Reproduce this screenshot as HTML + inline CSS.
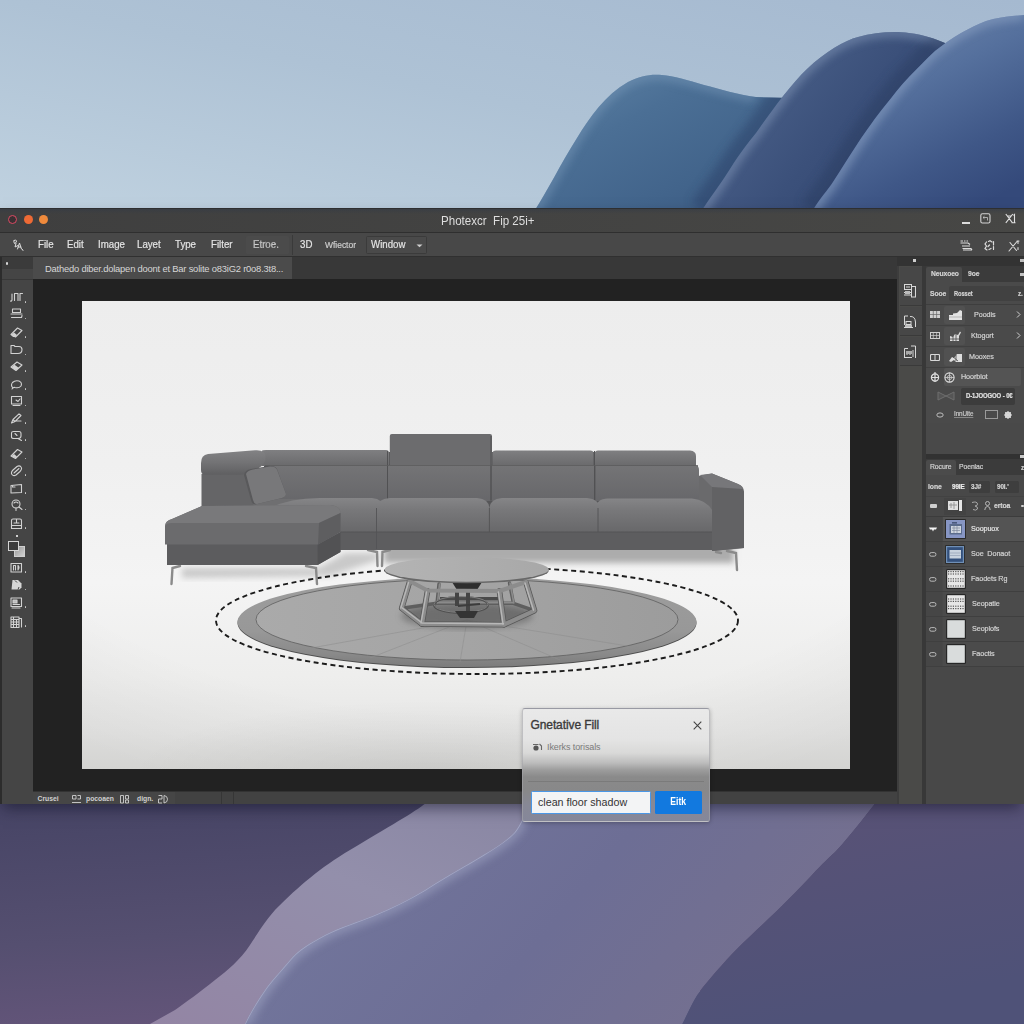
<!DOCTYPE html>
<html><head><meta charset="utf-8">
<style>
*{box-sizing:border-box;margin:0;padding:0}
html,body{width:1024px;height:1024px;overflow:hidden;background:#aec2d5;font-family:"Liberation Sans",sans-serif;}
.abs{position:absolute}
#wall{position:absolute;left:0;top:0;width:1024px;height:1024px}
#win{position:absolute;left:0;top:208px;width:1024px;height:596px;background:#222;box-shadow:0 7px 14px -3px rgba(15,15,35,0.55);overflow:hidden}
#title{position:absolute;left:0;top:0;width:1024px;height:24px;background:linear-gradient(to bottom,rgba(50,58,70,0.5) 0,rgba(60,62,66,0) 5px),linear-gradient(to right,#3f3f3f,#474745);border-top:1px solid #2e2f31}
#menu{position:absolute;left:0;top:24px;width:1024px;height:25px;background:#484848;border-top:1px solid #2f2f2f;border-bottom:1px solid #303030}
.mi{position:absolute;-webkit-text-stroke:0.2px #e4e4e4;z-index:2;transform:scaleX(0.88);transform-origin:0 0;top:5px;font-size:11px;color:#e4e4e4;line-height:12px;white-space:nowrap}
#ttl{position:absolute;left:441px;top:4px;font-size:13px;color:#dedede;white-space:nowrap;transform:scaleX(0.89);transform-origin:0 0}
.tl{position:absolute;top:6px;width:9px;height:9px;border-radius:50%}
#tools{position:absolute;left:0;top:49px;width:33px;height:548px;background:#454545;border-left:2px solid #2c2c2c}
#tabbar{position:absolute;left:33px;top:49px;width:864px;height:21.5px;background:#383838}
#tab{position:absolute;left:0;top:0;width:259px;height:21.5px;background:#4b4b4b;font-size:9.4px;color:#d6d6d6;line-height:24px;padding-left:12px;white-space:nowrap;letter-spacing:-0.2px;overflow:hidden}
#status{position:absolute;left:33px;top:582.5px;width:864px;height:14px;background:#424242;border-top:1px solid #333}
#dock{position:absolute;left:897px;top:49px;width:127px;height:548px;background:#3d3d3d}

#dock .t{position:absolute;-webkit-text-stroke:0.2px currentColor;transform:scaleX(0.9);transform-origin:0 50%;font-size:8px;color:#d4d4d4;white-space:nowrap;line-height:10px;letter-spacing:-0.1px}
#dock .b{position:absolute}
.ic{position:absolute;}

#dlg{position:absolute;left:522px;top:707.5px;width:187.5px;height:114.5px;border-radius:3px;border:1px solid rgba(165,165,170,0.6);
background:linear-gradient(to bottom,#e9e9e9 0px,#e4e4e4 30px,#d9d9d8 44px,#bcbcbc 54px,#9c9c9c 61px,#8a8a8a 68px,#888889 82px,#878896 97px,#85879a 114px);box-shadow:0 1px 4px rgba(0,0,0,0.25)}
#dlg .h{position:absolute;left:7.5px;top:9px;font-size:12px;-webkit-text-stroke:0.35px #3a3a3a;color:#3a3a3a;letter-spacing:-0.1px;white-space:nowrap;line-height:14px}
#dlg .sub{position:absolute;left:24px;top:33px;font-size:9px;color:#7a7a7a;white-space:nowrap;line-height:11px;letter-spacing:-0.1px}
#dlg .sep{position:absolute;left:5px;top:72.5px;width:176px;height:1px;background:#777;opacity:.8}
#dlg .inp{position:absolute;left:7.5px;top:82.5px;width:120.5px;height:22.5px;background:#f3f4f5;border:1px solid #4a97e6;border-radius:1.5px;font-size:10.7px;color:#333;line-height:20px;padding-left:6.5px;white-space:nowrap}
#dlg .btn{position:absolute;left:131.5px;top:82.5px;width:47.5px;height:22.5px;background:#1279df;border-radius:1.5px;color:#fff;font-weight:bold;font-size:10px;text-align:center;line-height:22px}
#dlg .btn span{display:inline-block;transform:scaleX(0.86)}
#status .t{position:absolute;top:3.5px;font-size:6.8px;color:#d0d0d0;line-height:8px;white-space:nowrap;font-weight:bold}
</style></head><body>
<svg id="wall" viewBox="0 0 1024 1024">
<defs>
<linearGradient id="sky" x1="1" y1="0" x2="0" y2="1"><stop offset="0" stop-color="#a5b9d0"/><stop offset="0.5" stop-color="#aec2d5"/><stop offset="1" stop-color="#c0d2e0"/></linearGradient>
<linearGradient id="h1" x1="0" y1="0" x2="1" y2="1"><stop offset="0" stop-color="#5f84a7"/><stop offset="0.35" stop-color="#4b6f95"/><stop offset="0.7" stop-color="#42648b"/><stop offset="1" stop-color="#3a5880"/></linearGradient>
<linearGradient id="h2" x1="0" y1="0.1" x2="1" y2="0.7"><stop offset="0" stop-color="#5a7398"/><stop offset="0.3" stop-color="#465c85"/><stop offset="0.6" stop-color="#3b507a"/><stop offset="1" stop-color="#32466f"/></linearGradient>
<linearGradient id="h3" x1="0.2" y1="0" x2="0.75" y2="1"><stop offset="0" stop-color="#7089b0"/><stop offset="0.4" stop-color="#55709d"/><stop offset="0.75" stop-color="#3f5787"/><stop offset="1" stop-color="#34497a"/></linearGradient>
<filter id="wb" x="-10%" y="-10%" width="120%" height="120%"><feGaussianBlur stdDeviation="5"/></filter><clipPath id="c1"><path d="M535,210 C548,190 560,165 577,138 C590,117 605,95 628,82 C640,76 650,74 662,75 C685,77 720,92 756,97 L790,98 L790,210 Z"/></clipPath><clipPath id="c2"><path d="M702,210 C712,195 722,182 730,169 C740,153 748,143 756,133 C768,116 790,85 807,69 C825,52 845,40 858,37 C875,32 895,31 909,33 C925,35 935,39 945,43 L945,210 Z"/></clipPath><clipPath id="c3"><path d="M813,210 C820,198 828,190 833,182 C842,168 850,155 858,143 C868,128 876,117 884,107 C893,96 900,86 909,77 C918,68 926,59 935,51 C944,44 952,38 961,33 C970,28 978,24 986,21 C996,18 1004,17 1012,16 L1024,15 L1024,210 Z"/></clipPath>
<clipPath id="cb"><path d="M530,800 C525,815 518,830 512,835 C500,846 488,852 475,860 C458,870 440,880 425,890 C408,900 392,908 375,915 C358,922 340,927 325,935 C310,943 298,950 290,960 C280,972 272,980 265,990 C256,1003 250,1013 245,1024 L682,1024 C688,1012 692,1003 697,995 C705,984 713,975 722,965 C735,950 748,938 762,925 C780,908 798,890 812,875 C822,864 830,857 837,850 C850,836 862,820 878,800 Z"/></clipPath>
<linearGradient id="lw" x1="0" y1="0" x2="0.3" y2="1"><stop offset="0" stop-color="#464465"/><stop offset="0.6" stop-color="#554f70"/><stop offset="1" stop-color="#64557a"/></linearGradient>
<linearGradient id="la" x1="1" y1="0" x2="0" y2="1"><stop offset="0" stop-color="#84829f"/><stop offset="0.5" stop-color="#938fab"/><stop offset="1" stop-color="#9385a4"/></linearGradient>
<linearGradient id="lb" x1="0" y1="0" x2="1" y2="0.3"><stop offset="0" stop-color="#74799f"/><stop offset="0.6" stop-color="#6d6e95"/><stop offset="1" stop-color="#75708f"/></linearGradient>
<linearGradient id="lr" x1="0" y1="0" x2="0.3" y2="1"><stop offset="0" stop-color="#5a5276"/><stop offset="1" stop-color="#4f5278"/></linearGradient>
</defs>
<rect width="1024" height="210" fill="url(#sky)"/>
<path d="M535,210 C548,190 560,165 577,138 C590,117 605,95 628,82 C640,76 650,74 662,75 C685,77 720,92 756,97 L790,98 L790,210 Z" fill="url(#h1)"/><g clip-path="url(#c1)"><path d="M535,210 C548,190 560,165 577,138 C590,117 605,95 628,82 C640,76 650,74 662,75 C685,77 720,92 756,97" fill="none" stroke="#7c9cbc" stroke-width="9" opacity="0.55" filter="url(#wb)"/></g>
<g clip-path="url(#c1)"><path d="M702,210 C712,195 722,182 730,169 C740,153 748,143 756,133 C768,116 790,85 807,69 C825,52 845,40 858,37 C875,32 895,31 909,33 C925,35 935,39 945,43" fill="none" stroke="#2c4068" stroke-width="26" opacity="0.5" filter="url(#wb)"/></g><path d="M702,210 C712,195 722,182 730,169 C740,153 748,143 756,133 C768,116 790,85 807,69 C825,52 845,40 858,37 C875,32 895,31 909,33 C925,35 935,39 945,43 L945,210 Z" fill="url(#h2)"/><g clip-path="url(#c2)"><path d="M702,210 C712,195 722,182 730,169 C740,153 748,143 756,133 C768,116 790,85 807,69 C825,52 845,40 858,37 C875,32 895,31 909,33 C925,35 935,39 945,43" fill="none" stroke="#7e93b4" stroke-width="9" opacity="0.7" filter="url(#wb)"/></g>
<g clip-path="url(#c2)"><path d="M813,210 C820,198 828,190 833,182 C842,168 850,155 858,143 C868,128 876,117 884,107 C893,96 900,86 909,77 C918,68 926,59 935,51 C944,44 952,38 961,33 C970,28 978,24 986,21 C996,18 1004,17 1012,16 L1024,15" fill="none" stroke="#2a3c62" stroke-width="26" opacity="0.5" filter="url(#wb)"/></g><path d="M813,210 C820,198 828,190 833,182 C842,168 850,155 858,143 C868,128 876,117 884,107 C893,96 900,86 909,77 C918,68 926,59 935,51 C944,44 952,38 961,33 C970,28 978,24 986,21 C996,18 1004,17 1012,16 L1024,15 L1024,210 Z" fill="url(#h3)"/><g clip-path="url(#c3)"><path d="M813,210 C820,198 828,190 833,182 C842,168 850,155 858,143 C868,128 876,117 884,107 C893,96 900,86 909,77 C918,68 926,59 935,51 C944,44 952,38 961,33 C970,28 978,24 986,21 C996,18 1004,17 1012,16 L1024,15" fill="none" stroke="#8aa0c2" stroke-width="9" opacity="0.7" filter="url(#wb)"/></g>
<rect y="800" width="1024" height="224" fill="url(#lw)"/>
<path d="M430,800 C415,812 400,820 350,850 C320,868 300,885 275,910 C262,925 255,938 250,945 C240,960 228,970 215,980 C200,992 185,1003 175,1010 L150,1024 L700,1024 L700,800 Z" fill="url(#la)"/>
<path d="M530,800 C525,815 518,830 512,835 C500,846 488,852 475,860 C458,870 440,880 425,890 C408,900 392,908 375,915 C358,922 340,927 325,935 C310,943 298,950 290,960 C280,972 272,980 265,990 C256,1003 250,1013 245,1024 L682,1024 C688,1012 692,1003 697,995 C705,984 713,975 722,965 C735,950 748,938 762,925 C780,908 798,890 812,875 C822,864 830,857 837,850 C850,836 862,820 878,800 Z" fill="url(#lb)"/><g clip-path="url(#cb)"><path d="M530,800 C525,815 518,830 512,835 C500,846 488,852 475,860 C458,870 440,880 425,890 C408,900 392,908 375,915 C358,922 340,927 325,935 C310,943 298,950 290,960 C280,972 272,980 265,990 C256,1003 250,1013 245,1024" fill="none" stroke="#a9aeca" stroke-width="10" opacity="0.55" filter="url(#wb)"/><path d="M530,800 C525,815 518,830 512,835 C500,846 488,852 475,860 C458,870 440,880 425,890 C408,900 392,908 375,915 C358,922 340,927 325,935 C310,943 298,950 290,960 C280,972 272,980 265,990 C256,1003 250,1013 245,1024" fill="none" stroke="#b4b8d2" stroke-width="1.6" opacity="0.6"/></g>
<path d="M878,800 C862,820 850,836 837,850 C830,857 822,864 812,875 C798,890 780,908 762,925 C748,938 735,950 722,965 C713,975 705,984 697,995 C692,1003 688,1012 682,1024 L1024,1024 L1024,800 Z" fill="url(#lr)"/>
</svg>

<div id="win">
 <div id="title">
  <div class="tl" style="left:8px;border:1.5px solid #dc4a64;background:#3a3033"></div>
  <div class="tl" style="left:24px;background:#ee6a35"></div>
  <div class="tl" style="left:39px;background:#ef8a3c"></div>
  
  <div class="abs" style="left:962px;top:13px;width:8px;height:2px;background:#dcdcdc"></div>
  <svg class="abs" style="left:980px;top:4px" width="11" height="11" viewBox="0 0 11 11"><rect x="0.8" y="0.8" width="9.2" height="9.2" rx="1.6" fill="none" stroke="#d4d4d4" stroke-width="1.1"/><path d="M3,4.5H7.5V7.5M3,4.5L4.5,3.2M3,4.5L4.5,5.8" fill="none" stroke="#c8c8c8" stroke-width="0.8"/></svg>
  <svg class="abs" style="left:1005px;top:4px" width="11" height="11" viewBox="0 0 11 11"><path d="M0.8,1L7.5,9.8M7.8,1L0.8,9.8M8.5,2.5L9.5,1.5V9.8M6.5,9.8H10.5M2,3H6" fill="none" stroke="#e0e0e0" stroke-width="1.1"/></svg>
  <div id="ttl">Photexcr&nbsp; Fip 25i+</div>
 </div>
 <div id="menu">
  
  <svg class="abs" style="left:12.5px;top:5.5px" width="11" height="12" viewBox="0 0 11 12"><path d="M1,1.5Q3,0 3.5,2Q3.5,4 1.5,4.5Q0.5,3 1,1.5M3,4.5L2,8L5,6.5M4.5,10L6.5,4L8.5,10M5.2,8H7.8M9.5,10.5L10,11.5" fill="none" stroke="#dedede" stroke-width="1" stroke-linecap="round"/></svg>
  <div class="abs" style="left:246px;top:3px;width:43px;height:18px;background:#4b4b4b;border-radius:1.5px"></div>
  <div class="abs" style="left:292px;top:2px;width:1px;height:20px;background:#3a3a3a"></div>
  <div class="abs" style="left:366px;top:3px;width:61px;height:18px;background:#4a4a4a;border:1px solid #3b3b3b;border-radius:1.5px"></div>
  <svg class="abs" style="left:415.5px;top:10.5px" width="7" height="4" viewBox="0 0 7 4"><path d="M0.5,0.5L3.5,3.3L6.5,0.5Z" fill="#cfcfcf"/></svg>
  <svg class="abs" style="left:959.5px;top:7px" width="13" height="11" viewBox="0 0 13 11"><path d="M0.5,1H3M4,1H5.5M6.5,1H8M0.5,3H8L10,4.5M2,6H10M2.5,8.5H11L12,10M3,10H12" fill="none" stroke="#dcdcdc" stroke-width="1.2"/></svg>
  <svg class="abs" style="left:984px;top:7px" width="12" height="11" viewBox="0 0 12 11"><path d="M2.5,2L1,4L2.5,6L1,8.5L3,10M4.5,1.5L6,0.8L8,2M9.5,1.5V5M9.5,6.5V9.5M5,9.5L7,8.5M5.5,5L4,6.5" fill="none" stroke="#dcdcdc" stroke-width="1.2" stroke-linecap="round"/></svg>
  <svg class="abs" style="left:1008px;top:6.5px" width="12" height="12" viewBox="0 0 12 12"><path d="M1,11L9,1.5M2,2.5L8.5,10.5M10,1V3.5M10,7.5V9.5M9,1H11" fill="none" stroke="#dcdcdc" stroke-width="1.1" stroke-linecap="round"/></svg>
  <span class="mi" style="left:38px">File</span>
  <span class="mi" style="left:67px">Edit</span>
  <span class="mi" style="left:98px">Image</span>
  <span class="mi" style="left:137px">Layet</span>
  <span class="mi" style="left:175px">Type</span>
  <span class="mi" style="left:211px">Filter</span>
  <span class="mi" style="left:253px;color:#b5b5b5">Etroe.</span>
  <span class="mi" style="left:300px">3D</span>
  <span class="mi" style="left:324.5px;color:#cfcfcf;font-size:9.6px;top:6px;-webkit-text-stroke:0.2px #cfcfcf">Wfiector</span>
  <span class="mi" style="left:371px">Window</span>
 </div>
 <div id="tools">
<svg class="abs" style="left:8px;top:34.55px" width="13" height="12" viewBox="0 0 13 12"><g fill="none" stroke="#d2d2d2" stroke-width="1.1" stroke-linecap="round" stroke-linejoin="round"><path d="M2,2V8Q1.5,9.5 0.5,9M4.5,8.5V1.5H8V8.5M10,8.5V1.5H12.5"/></g></svg>
<div class="abs" style="left:22.5px;top:43.8px;width:1.8px;height:1.8px;background:#cfcfcf;border-radius:0.5px"></div>
<svg class="abs" style="left:8px;top:51.25px" width="13" height="12" viewBox="0 0 13 12"><g fill="none" stroke="#d2d2d2" stroke-width="1.1" stroke-linecap="round" stroke-linejoin="round"><path d="M2.5,1H10.5V4.5H2.5ZM1,6H12M1.5,9.5H11.5L12,7.5"/></g></svg>
<div class="abs" style="left:22.5px;top:60.5px;width:1.8px;height:1.8px;background:#cfcfcf;border-radius:0.5px"></div>
<svg class="abs" style="left:8px;top:69.75px" width="13" height="12" viewBox="0 0 13 12"><g fill="none" stroke="#d2d2d2" stroke-width="1.1" stroke-linecap="round" stroke-linejoin="round"><path d="M1,7.5L7.5,1L12,3.5L5.5,10ZM1,7.5L3.5,9.5"/></g><path d="M1.5,7.8L4,5.5L7,8L5.5,9.7Z" fill="#d2d2d2"/></svg>
<div class="abs" style="left:22.5px;top:79px;width:1.8px;height:1.8px;background:#cfcfcf;border-radius:0.5px"></div>
<svg class="abs" style="left:8px;top:87.25px" width="13" height="12" viewBox="0 0 13 12"><g fill="none" stroke="#d2d2d2" stroke-width="1.1" stroke-linecap="round" stroke-linejoin="round"><path d="M1,9.5V1.5H4L5,2.5H9Q12,2.5 12,5.5Q12,9.5 8,9.5Z"/></g></svg>
<div class="abs" style="left:22.5px;top:96.5px;width:1.8px;height:1.8px;background:#cfcfcf;border-radius:0.5px"></div>
<svg class="abs" style="left:8px;top:104.05px" width="13" height="12" viewBox="0 0 13 12"><g fill="none" stroke="#d2d2d2" stroke-width="1.1" stroke-linecap="round" stroke-linejoin="round"><path d="M1,6L7,1L12,4L6,9.5Z"/></g><path d="M1.5,6.2L4.5,3.8L9,7L6,9.3Z" fill="#d2d2d2"/></svg>
<div class="abs" style="left:22.5px;top:113.3px;width:1.8px;height:1.8px;background:#cfcfcf;border-radius:0.5px"></div>
<svg class="abs" style="left:8px;top:121.65px" width="13" height="12" viewBox="0 0 13 12"><g fill="none" stroke="#d2d2d2" stroke-width="1.1" stroke-linecap="round" stroke-linejoin="round"><path d="M2.5,8.5Q0.5,6 2.5,3.5Q5,1 9,2Q12.5,3.5 11,7Q9,9.5 5,8.5Q3.5,8 2,10"/></g></svg>
<div class="abs" style="left:22.5px;top:130.9px;width:1.8px;height:1.8px;background:#cfcfcf;border-radius:0.5px"></div>
<svg class="abs" style="left:8px;top:138.25px" width="13" height="12" viewBox="0 0 13 12"><g fill="none" stroke="#d2d2d2" stroke-width="1.1" stroke-linecap="round" stroke-linejoin="round"><rect x="1.5" y="1.5" width="10" height="7.5"/><path d="M3,10.5H10M6,5L8,6.5L10,4"/></g></svg>
<div class="abs" style="left:22.5px;top:147.5px;width:1.8px;height:1.8px;background:#cfcfcf;border-radius:0.5px"></div>
<svg class="abs" style="left:8px;top:155.95px" width="13" height="12" viewBox="0 0 13 12"><g fill="none" stroke="#d2d2d2" stroke-width="1.1" stroke-linecap="round" stroke-linejoin="round"><path d="M1.5,10L3,6.5L9,0.8L11,2.5L5,8.5ZM3,6.5L5,8.5M6.5,8H11"/></g></svg>
<div class="abs" style="left:22.5px;top:165.2px;width:1.8px;height:1.8px;background:#cfcfcf;border-radius:0.5px"></div>
<svg class="abs" style="left:8px;top:172.65px" width="13" height="12" viewBox="0 0 13 12"><g fill="none" stroke="#d2d2d2" stroke-width="1.1" stroke-linecap="round" stroke-linejoin="round"><path d="M1.5,7V3Q1.5,1.5 3.5,1.5H9Q11,1.5 11,3.5V6Q11,8.5 8,8.5H4Q1.5,8.5 1.5,7ZM8,8.5L11.5,10.5M5,3.5L7,5.5"/></g></svg>
<div class="abs" style="left:22.5px;top:181.9px;width:1.8px;height:1.8px;background:#cfcfcf;border-radius:0.5px"></div>
<svg class="abs" style="left:8px;top:191.25px" width="13" height="12" viewBox="0 0 13 12"><g fill="none" stroke="#d2d2d2" stroke-width="1.1" stroke-linecap="round" stroke-linejoin="round"><path d="M1,8L7.5,1.5L12,4L5.5,10.5Z"/></g><path d="M1.5,8.2L4,6L7,8.5L5.5,10.2Z" fill="#d2d2d2"/></svg>
<div class="abs" style="left:22.5px;top:200.5px;width:1.8px;height:1.8px;background:#cfcfcf;border-radius:0.5px"></div>
<svg class="abs" style="left:8px;top:208.05px" width="13" height="12" viewBox="0 0 13 12"><g fill="none" stroke="#d2d2d2" stroke-width="1.1" stroke-linecap="round" stroke-linejoin="round"><path d="M2,9.5Q0.5,7.5 3,5L7,1.5Q9.5,0 11,2Q12.5,4 10,6.5L6,10Q3.5,11.5 2,9.5Z"/><path d="M4,8L9,3.5"/></g></svg>
<div class="abs" style="left:22.5px;top:217.3px;width:1.8px;height:1.8px;background:#cfcfcf;border-radius:0.5px"></div>
<svg class="abs" style="left:8px;top:225.65px" width="13" height="12" viewBox="0 0 13 12"><g fill="none" stroke="#d2d2d2" stroke-width="1.1" stroke-linecap="round" stroke-linejoin="round"><path d="M1,10V2.5L11.5,1.5V9.5Z"/><path d="M2.5,2.5V4H5"/></g></svg>
<div class="abs" style="left:22.5px;top:234.9px;width:1.8px;height:1.8px;background:#cfcfcf;border-radius:0.5px"></div>
<svg class="abs" style="left:8px;top:242.25px" width="13" height="12" viewBox="0 0 13 12"><g fill="none" stroke="#d2d2d2" stroke-width="1.1" stroke-linecap="round" stroke-linejoin="round"><circle cx="6" cy="5" r="4"/><path d="M4,4Q6,2 8,4M6,9V11.5M9,8L12,10.5"/></g></svg>
<div class="abs" style="left:22.5px;top:251.5px;width:1.8px;height:1.8px;background:#cfcfcf;border-radius:0.5px"></div>
<svg class="abs" style="left:8px;top:260.85px" width="13" height="12" viewBox="0 0 13 12"><g fill="none" stroke="#d2d2d2" stroke-width="1.1" stroke-linecap="round" stroke-linejoin="round"><path d="M1.5,10.5V2.5Q1.5,1 3,1H10Q11.5,1 11.5,2.5V10.5ZM1.5,7.5H11.5M6.5,1V5M4,5H9"/></g></svg>
<div class="abs" style="left:22.5px;top:270.1px;width:1.8px;height:1.8px;background:#cfcfcf;border-radius:0.5px"></div>
<svg class="abs" style="left:8px;top:304.85px" width="13" height="12" viewBox="0 0 13 12"><g fill="none" stroke="#d2d2d2" stroke-width="1.1" stroke-linecap="round" stroke-linejoin="round"><rect x="1" y="1.5" width="10.5" height="8.5"/><path d="M3.5,3.5V8M3.5,3.5H5.5V8M8,3.5Q10,5.5 8,8M8,3.5V8"/></g></svg>
<div class="abs" style="left:22.5px;top:314.1px;width:1.8px;height:1.8px;background:#cfcfcf;border-radius:0.5px"></div>
<svg class="abs" style="left:8px;top:322.45px" width="13" height="12" viewBox="0 0 13 12"><path d="M2.5,1H8L11.5,4.5V8.5L9.5,10.5H1.5Z" fill="#d6d6d6"/><path d="M5,1.5L7,3.5M8,10.5L9,8" stroke="#464646" stroke-width="1"/></svg>
<div class="abs" style="left:22.5px;top:331.7px;width:1.8px;height:1.8px;background:#cfcfcf;border-radius:0.5px"></div>
<svg class="abs" style="left:8px;top:340.05px" width="13" height="12" viewBox="0 0 13 12"><g fill="none" stroke="#d2d2d2" stroke-width="1.1" stroke-linecap="round" stroke-linejoin="round"><rect x="1" y="1" width="10.5" height="8.5"/><rect x="3" y="3" width="4" height="3" fill="#bdbdbd"/><path d="M2,11H10M3,7.5H9.5"/></g></svg>
<div class="abs" style="left:22.5px;top:349.3px;width:1.8px;height:1.8px;background:#cfcfcf;border-radius:0.5px"></div>
<svg class="abs" style="left:8px;top:358.55px" width="13" height="12" viewBox="0 0 13 12"><g fill="none" stroke="#d2d2d2" stroke-width="1.1" stroke-linecap="round" stroke-linejoin="round"><path d="M1,1H9V11.5H1ZM1,3.5H9M1,6H9M1,8.5H9M3.5,1V11.5M6.5,3.5V11.5M9,2.5H11.5V11"/></g></svg>
<div class="abs" style="left:22.5px;top:367.8px;width:1.8px;height:1.8px;background:#cfcfcf;border-radius:0.5px"></div>
<div class="abs" style="left:11.5px;top:289px;width:11.5px;height:11px;background:linear-gradient(135deg,#9a9a9a,#d0d0d0);border:1px solid #cfcfcf"></div>
<div class="abs" style="left:6px;top:283.5px;width:11px;height:10.5px;background:#3c3c3c;border:1px solid #d4d4d4"></div>
<div class="abs" style="left:14px;top:278px;width:1.5px;height:1.5px;background:#cfcfcf"></div>
<div class="abs" style="left:0;top:0;width:31px;height:11.5px;background:#3b3b3b"></div>
<div class="abs" style="left:4px;top:5px;width:2px;height:3px;background:#d8d8d8;border-radius:1px"></div>
<div class="abs" style="left:0;top:22px;width:31px;height:1px;background:#383838"></div>
</div>
 <div id="tabbar"><div id="tab">Dathedo diber.dolapen doont et Bar solite o83iG2 r0o8.3t8...</div></div>

<svg id="canvas" class="abs" style="left:82px;top:93px" width="768" height="468" viewBox="82 301 768 468">
<defs>
<linearGradient id="cbg" x1="0" y1="0" x2="0" y2="1"><stop offset="0" stop-color="#ededed"/><stop offset="0.35" stop-color="#f0f0f0"/><stop offset="0.6" stop-color="#f4f4f4"/><stop offset="0.8" stop-color="#eeeeed"/><stop offset="0.92" stop-color="#e7e7e6"/><stop offset="1" stop-color="#dfdfdd"/></linearGradient>
<radialGradient id="cdark" cx="0.5" cy="0.5" r="0.5"><stop offset="0" stop-color="#000" stop-opacity="0.075"/><stop offset="1" stop-color="#000" stop-opacity="0"/></radialGradient>
<radialGradient id="cvig" cx="0.5" cy="0.2" r="0.9"><stop offset="0.75" stop-color="#000" stop-opacity="0"/><stop offset="1" stop-color="#000" stop-opacity="0.05"/></radialGradient>
<linearGradient id="sTop" x1="0" y1="0" x2="0" y2="1"><stop offset="0" stop-color="#7f7f81"/><stop offset="1" stop-color="#6a6a6c"/></linearGradient>
<linearGradient id="sSeat" x1="0" y1="0" x2="0" y2="1"><stop offset="0" stop-color="#858587"/><stop offset="0.35" stop-color="#78787a"/><stop offset="1" stop-color="#68686a"/></linearGradient>
<linearGradient id="sBack" x1="0" y1="0" x2="0" y2="1"><stop offset="0" stop-color="#747476"/><stop offset="1" stop-color="#67676a"/></linearGradient>
<linearGradient id="rugIn" x1="0" y1="0" x2="1" y2="0"><stop offset="0" stop-color="#aaaaaa"/><stop offset="0.5" stop-color="#a4a4a4"/><stop offset="1" stop-color="#9c9c9c"/></linearGradient>
<linearGradient id="rugOut" x1="0" y1="0" x2="0" y2="1"><stop offset="0" stop-color="#9d9d9d"/><stop offset="0.6" stop-color="#989898"/><stop offset="0.85" stop-color="#8a8a8a"/><stop offset="1" stop-color="#7c7c7c"/></linearGradient>
<linearGradient id="sHead" x1="0" y1="0" x2="0" y2="1"><stop offset="0" stop-color="#828284"/><stop offset="0.5" stop-color="#737375"/><stop offset="1" stop-color="#5f5f61"/></linearGradient>
<linearGradient id="ttop" x1="0" y1="0" x2="1" y2="0"><stop offset="0" stop-color="#b4b4b4"/><stop offset="1" stop-color="#a8a8a8"/></linearGradient>
<filter id="b3"><feGaussianBlur stdDeviation="3"/></filter>
<filter id="b1"><feGaussianBlur stdDeviation="1.2"/></filter>
</defs>
<rect x="82" y="301" width="768" height="468" fill="url(#cbg)"/>
<rect x="82" y="301" width="768" height="468" fill="url(#cvig)"/>
<ellipse cx="430" cy="775" rx="300" ry="75" fill="url(#cdark)"/>
<!-- floor shadows -->
<g filter="url(#b3)">
<rect x="384" y="540" width="350" height="23" fill="#9a9a9a" opacity="0.8"/>
<path d="M182,568 L318,568 L345,553 L378,553 L378,560 L330,576 L182,578 Z" fill="#a0a0a0" opacity="0.5"/>
</g>
<!-- rug -->
<ellipse cx="467" cy="623" rx="229.5" ry="45" fill="#4e4e4e"/>
<ellipse cx="467" cy="622" rx="229.5" ry="45" fill="url(#rugOut)"/>
<ellipse cx="467" cy="619.5" rx="211" ry="40.5" fill="url(#rugIn)" stroke="#5e5e5e" stroke-width="0.8"/>
<g stroke="#8e8e8e" stroke-width="0.7" opacity="0.8">
<line x1="467" y1="620" x2="300" y2="650"/><line x1="467" y1="620" x2="460" y2="662"/><line x1="467" y1="620" x2="640" y2="648"/><line x1="467" y1="620" x2="560" y2="660"/><line x1="467" y1="620" x2="370" y2="658"/>
</g>
<!-- dashed selection -->
<ellipse cx="477" cy="620.5" rx="261" ry="53.5" fill="none" stroke="#1c1c1c" stroke-width="1.9" stroke-dasharray="5 3.5"/>
<!-- sofa -->
<g>
<rect x="264" y="452" width="430" height="16" fill="#565658"/><rect x="264" y="466" width="434" height="66" fill="#565658"/>
<!-- legs -->
<g stroke="#8a8a8a" stroke-width="2.4" fill="none" stroke-linecap="round">
<path d="M180,566 L172.5,568 L171.5,584"/><path d="M306,566 L316,568 L317,584"/>
<path d="M368,550 L377,552 L377.5,566"/><path d="M390,550 L382.5,552 L382,566"/>
<path d="M716,552 L721,553"/><path d="M727,551 L736,553 L737,570"/>
</g>
<!-- base long -->
<path d="M340,531 L716,531 L716,550 L340,550 Z" fill="#5d5d5f"/>
<!-- right arm -->
<path d="M698,476 L712,473.5 L738,484 Q744,486 744,492 L744,548 L712,551 L712,532 L698,532 Z" fill="#6a6a6c"/>
<path d="M712,486 L742,488 L744,492 L744,548 L712,551 Z" fill="#626264"/>
<path d="M700,475 L712,473.5 L738,484 Q742,486 743,489 L712,487 Z" fill="#77777a"/>
<!-- headrests row -->
<path d="M262,451 Q262,450 266,450 L386,450 Q389,450 389,453 L389,466 L262,466 Z" fill="url(#sTop)"/>
<rect x="389.8" y="434" width="102.2" height="32" rx="2" fill="#6c6c6e"/>
<path d="M492.5,453 Q492.5,450.5 496,450.5 L590,450.5 Q593.5,450.5 593.5,453 L593.5,466 L492.5,466 Z" fill="url(#sTop)"/>
<path d="M595,453 Q595,450.5 598,450.5 L690,450.5 Q696,451 696,456 L696,466 L595,466 Z" fill="url(#sTop)"/>
<!-- back cushions -->
<rect x="270" y="465" width="117" height="36" fill="url(#sBack)"/>
<rect x="388" y="465" width="102.5" height="36" fill="url(#sBack)"/>
<rect x="491.5" y="465" width="103" height="36" fill="url(#sBack)"/>
<path d="M595.5,465.5 L696,465.5 Q699,466 699,470 L699,501 L595.5,501 Z" fill="url(#sBack)"/>
<g stroke="#515153" stroke-width="1"><line x1="387.5" y1="451" x2="387.5" y2="500"/><line x1="491" y1="436" x2="491" y2="500"/><line x1="594.5" y1="451" x2="594.5" y2="500"/><line x1="265" y1="465.5" x2="698" y2="465.5" stroke="#5a5a5c" stroke-width="0.8"/></g>
<!-- seats -->
<rect x="252" y="499" width="126" height="33" fill="#6f6f71"/>
<path d="M270,508 Q290,498 320,498 L372,498 Q383,499 383.5,508 L383.5,532 L270,532 Z" fill="url(#sSeat)"/>
<path d="M377,508 Q377,499 390,498 L477,498 Q489,499 489.4,508 L489.4,532 L377,532 Z" fill="url(#sSeat)"/>
<path d="M489.4,508 Q490,499 502,498 L587,498 Q599,499 599.8,508 L599.8,532 L489.4,532 Z" fill="url(#sSeat)"/>
<path d="M596,508 Q596,499 608,498.5 L692,498.5 Q706,500 712,510 L712,532 L596,532 Z" fill="url(#sSeat)"/>
<g stroke="#545456" stroke-width="0.9"><line x1="376.5" y1="508" x2="376.5" y2="549"/><line x1="489.4" y1="508" x2="489.4" y2="532"/><line x1="598" y1="508" x2="598" y2="532"/><line x1="340" y1="532" x2="712" y2="532"/></g>
<!-- left arm block -->
<rect x="201.5" y="474" width="52" height="33" fill="#656567"/>
<!-- left headrest -->
<path d="M201,463 Q201,455 208,454 L255,450.3 Q265.5,449.5 265.5,457 Q265.5,465 258,468.5 L246,474 Q244,474.8 240,474.8 L205,474.8 Q201,474.8 201,470 Z" fill="url(#sHead)"/>
<!-- slanted arm cushion -->
<path d="M244,475 Q245,470 251,469 L270,466 Q275,465.5 277,469 L286,494 Q286,497 280,498.5 L255,504.5 Q252,504 251,500 Z" fill="#59595b"/><path d="M246,474 Q247,470.5 253,469.5 L270,466.5 Q275,466 277,469.5 L286,494 Q286,497 280,498.5 L257,504 Q254,504 253,500 Z" fill="#78787a"/>
<!-- chaise -->
<path d="M167,544 L317.6,544 L340.5,532 L340.5,552 L317.6,565 L167,565 Z" fill="#5c5c5e"/>
<path d="M317.6,544 L340.5,532 L340.5,552 L317.6,565 Z" fill="#525254"/>
<path d="M202,506 L330,505 Q340.5,506 340.5,513 L340.5,532 L318,544.5 L165,544.5 L165,526 Q165,521 172,519 Z" fill="#6b6b6d"/>
<path d="M202,506 L330,505 Q340.5,506 340.5,513 L319,523 L172,523 Q166,523 165.5,526 Q165,521 172,519 Z" fill="#79797b"/>
<path d="M319,523 L340.5,513 L340.5,532 L318,544.5 Z" fill="#5e5e60"/>
</g>
<!-- table -->
<g>
<ellipse cx="467" cy="616" rx="66" ry="13" fill="#5e5e5e" opacity="0.55" filter="url(#b3)"/>
<path d="M401.7,608.3 L437,603 L513.4,603 L534.5,610.6 L504,624.7 L422,624 Z" fill="#000" opacity="0.12"/>
<g stroke="#5e5e5e" stroke-width="3.4" fill="none" stroke-linejoin="round" stroke-linecap="round">
<path d="M437,603.3 L513.4,603.3"/>
<path d="M439,584 L437,603.3"/><path d="M509.5,583 L513.4,603.3"/>
<path d="M401.7,608.3 L437,603.3 M513.4,603.3 L534.5,610.6"/>
</g>
<g stroke="#8a8a8a" stroke-width="1.6" fill="none" stroke-linecap="round"><path d="M439.5,584 L437.5,603 M510,583 L513.8,603 M438,602.6 L513,602.6"/></g>
<path d="M440,597 H500 V600.5 H440 Z" fill="#4a4a4a"/>
<ellipse cx="461" cy="605" rx="27" ry="8" fill="none" stroke="#4f4f4f" stroke-width="2"/>
<ellipse cx="461" cy="604.4" rx="27" ry="8" fill="none" stroke="#8c8c8c" stroke-width="0.8"/>
<path d="M452,582 L482,582 L477,590 L457,590 Z" fill="#2e2e2e"/>
<path d="M455,590 H459 V606 H455 Z M466,590 H470 V612 H466 Z" fill="#444"/>
<path d="M455,611 L478,611 L474,618 L460,618 Z" fill="#343434"/>
<path d="M458,606 L480,604" stroke="#3c3c3c" stroke-width="2"/>
<g stroke="#555" stroke-width="5.6" fill="none" stroke-linejoin="round" stroke-linecap="round">
<path d="M409.5,582 L401.7,608.3 L422,624 L504,624.7 L534.5,610.6 L526,582.5"/>
<path d="M427.5,591 L422,624"/><path d="M499.4,591 L504,624.7"/>
</g>
<g stroke="#8c8c8c" stroke-width="4.2" fill="none" stroke-linejoin="round" stroke-linecap="round">
<path d="M409.5,581 L427.5,590.5 L499.4,591 L526,582"/>
<path d="M409.5,582 L401.7,608.3 L422,624 L504,624.7 L534.5,610.6 L526,582.5"/>
<path d="M427.5,591 L422,624"/><path d="M499.4,591 L504,624.7"/>
</g>
<g stroke="#b8b8b8" stroke-width="1.4" fill="none" stroke-linecap="round" stroke-linejoin="round">
<path d="M426.5,592 L421,623"/><path d="M498.4,592 L503,624"/><path d="M408.5,582.5 L400.8,608"/><path d="M525,583 L533.5,610"/><path d="M402,607.8 L422,623 L503.5,623.7"/>
</g>
<ellipse cx="466.7" cy="570.8" rx="82" ry="12.5" fill="#686868"/>
<ellipse cx="466.7" cy="569.4" rx="82" ry="12.3" fill="url(#ttop)"/>
</g>
</svg>
 <div id="status">
<div class="abs" style="left:0;top:0;width:142px;height:15px;background:#464646"></div>
<div class="t" style="left:4.5px">Crusei</div>
<svg class="abs" style="left:39px;top:3px" width="9" height="9" viewBox="0 0 9 9"><path d="M0.5,0.5H4V4H0.5ZM5.5,0.5H8.5V4M0,7.5H9M5.5,4H8.5" fill="none" stroke="#d0d0d0" stroke-width="0.9"/></svg>
<div class="t" style="left:53px">pocoaen</div>
<svg class="abs" style="left:87px;top:3px" width="9" height="9" viewBox="0 0 9 9"><path d="M0.5,0.5H3.5V8H0.5ZM5.5,0.5H8.5V4H5.5ZM5.5,5H8.5V8H5.5Z" fill="none" stroke="#d0d0d0" stroke-width="0.9"/></svg>
<div class="t" style="left:104px">dign.</div>
<svg class="abs" style="left:124.5px;top:3px" width="10" height="9" viewBox="0 0 10 9"><path d="M0.5,0.5H4V4H0.5V8H4M6,0.5V8Q9.5,7.5 9.5,4.2Q9.5,1 6,0.5" fill="none" stroke="#d0d0d0" stroke-width="0.9"/></svg>
<div class="abs" style="left:188px;top:0;width:1px;height:15px;background:#363636"></div>
<div class="abs" style="left:200px;top:0;width:1px;height:15px;background:#363636"></div>
</div>
 <div id="dock">
<div class="b" style="left:0px;top:0px;width:127px;height:9px;background:#333;"></div>
<div class="b" style="left:16px;top:2px;width:3px;height:3px;background:#cfcfcf;"></div>
<div class="b" style="left:123px;top:2px;width:4px;height:3px;background:#bdbdbd;"></div>
<div class="b" style="left:2px;top:9px;width:23px;height:539px;background:#4a4a48;"></div>
<div class="b" style="left:2.5px;top:10px;width:23.5px;height:38.5px;background:#474747;border-bottom:1px solid #3a3a3a;"></div>
<div class="b" style="left:2.5px;top:50px;width:23.5px;height:28.5px;background:#474747;border-bottom:1px solid #3a3a3a;"></div>
<div class="b" style="left:2.5px;top:80px;width:23.5px;height:28.5px;background:#474747;border-bottom:1px solid #3a3a3a;"></div>
<svg class="ic" style="left:7px;top:26.5px" width="13" height="14" viewBox="0 0 13 14"><g fill="none" stroke="#d8d8d8" stroke-width="1"><rect x="0.5" y="0.5" width="7" height="5"/><rect x="7.5" y="2.5" width="4" height="10.5"/><path d="M0,8.5H7M0,11H7M2,3H6"/></g><rect x="1" y="7" width="5" height="3" fill="#bbb"/></svg>
<svg class="ic" style="left:7px;top:58px" width="13" height="14" viewBox="0 0 13 14"><g fill="none" stroke="#d8d8d8" stroke-width="1"><path d="M0.5,10V1H4M6,1.5Q11,1 11.5,7V12"/><path d="M0,12.5H9"/><rect x="2" y="6.5" width="5" height="3"/></g><rect x="1" y="10" width="7" height="2" fill="#bbb"/></svg>
<svg class="ic" style="left:7px;top:88px" width="13" height="14" viewBox="0 0 13 14"><g fill="none" stroke="#d8d8d8" stroke-width="1"><path d="M0.5,13V3.5H4M7,1H11.5V13"/><path d="M0,12.5H8M3,6V10M6,6V10M9,5V12"/></g><rect x="2" y="6" width="6" height="3" fill="#aaa"/></svg>
<div class="b" style="left:25px;top:9px;width:3.5px;height:539px;background:#383838;"></div>
<div class="b" style="left:28.5px;top:9px;width:98.5px;height:16px;background:#3b3b3b;"></div>
<div class="b" style="left:29px;top:9.5px;width:35.5px;height:15.5px;background:#4a4a4a;border-radius:2px 2px 0 0;"></div>
<div class="t" style="left:34px;top:12px;font-weight:bold;font-size:7.5px;">Neuxoeo</div>
<div class="t" style="left:70.5px;top:12px;font-weight:bold;font-size:7.5px;">9oe</div>
<div class="b" style="left:123px;top:16px;width:4px;height:2.5px;background:#c4c4c4;"></div>
<div class="b" style="left:28.5px;top:25px;width:98.5px;height:141px;background:#4a4a4a;"></div>
<div class="t" style="left:32.5px;top:31.5px;font-weight:bold;font-size:7.5px;">Sooe</div>
<div class="b" style="left:52px;top:29px;width:75px;height:14.5px;background:#414141;border-radius:2px;"></div>
<div class="t" style="left:57px;top:31.5px;font-weight:bold;font-size:7.5px;"><span style="display:inline-block;transform:scaleX(0.85);transform-origin:0 50%">Rosset</span></div>
<div class="t" style="left:121px;top:31.5px;font-size:7px;font-weight:bold">z.</div>
<div class="b" style="left:28.5px;top:46.5px;width:98.5px;height:1px;background:#3e3e3e;"></div>
<div class="b" style="left:47px;top:48.7px;width:20.5px;height:18px;background:#515151;border-radius:2px;"></div>
<svg class="ic" style="left:32.7px;top:54.2px" width="10" height="7" viewBox="0 0 10 7"><rect x="0" y="0" width="10" height="7" fill="#d0d0d0"/><path d="M0,3.5H10M3.3,0V7M6.6,0V7" stroke="#666" stroke-width="0.7"/></svg>
<svg class="ic" style="left:51.5px;top:52.7px" width="13" height="10" viewBox="0 0 13 10"><path d="M0,10V5H4V3.5L8,3L11,0L13,1V10Z" fill="#e2e2e2"/><path d="M0,7H13" stroke="#999" stroke-width="0.6"/></svg>
<div class="t" style="left:77px;top:52.7px;font-size:8px;">Poodis</div>
<svg class="ic" style="left:118.5px;top:54.2px" width="5" height="7" viewBox="0 0 5 7"><path d="M1,0.5L4,3.5L1,6.5" fill="none" stroke="#cfcfcf" stroke-width="1"/></svg>
<div class="b" style="left:28.5px;top:67.7px;width:98.5px;height:1px;background:#404040;"></div>
<div class="b" style="left:47px;top:69.7px;width:20.5px;height:18px;background:#515151;border-radius:2px;"></div>
<svg class="ic" style="left:32.7px;top:75.2px" width="10" height="7" viewBox="0 0 10 7"><rect x="0.5" y="0.5" width="9" height="6" fill="none" stroke="#d0d0d0"/><path d="M0,3.5H10M3.3,0V7M6.6,0V7" stroke="#cfcfcf" stroke-width="0.7"/></svg>
<svg class="ic" style="left:51.5px;top:73.7px" width="13" height="10" viewBox="0 0 13 10"><path d="M1,10V5L4,6L6,3L9,4L11,0.5L12,1.5L10,5V10Z" fill="#dcdcdc"/><path d="M0,8H12M4,5V10M7,3V10" stroke="#4a4a4a" stroke-width="0.8"/></svg>
<div class="t" style="left:74px;top:73.7px;font-size:8px;">Ktogort</div>
<svg class="ic" style="left:118.5px;top:75.2px" width="5" height="7" viewBox="0 0 5 7"><path d="M1,0.5L4,3.5L1,6.5" fill="none" stroke="#cfcfcf" stroke-width="1"/></svg>
<div class="b" style="left:28.5px;top:88.7px;width:98.5px;height:1px;background:#404040;"></div>
<div class="b" style="left:47px;top:91px;width:20.5px;height:18px;background:#515151;border-radius:2px;"></div>
<svg class="ic" style="left:32.7px;top:96.5px" width="10" height="7" viewBox="0 0 10 7"><rect x="0.5" y="0.5" width="9" height="6" rx="1" fill="none" stroke="#d8d8d8" stroke-width="1.1"/><path d="M5,0V7" stroke="#d8d8d8" stroke-width="1"/></svg>
<svg class="ic" style="left:51.5px;top:95px" width="13" height="10" viewBox="0 0 13 10"><path d="M0,9L3,5L5,6L8,2H13V10H7L5,8L2,10Z" fill="#dedede"/><path d="M3,4L9,9M7,3V9" stroke="#4a4a4a" stroke-width="0.8"/></svg>
<div class="t" style="left:72px;top:95px;font-size:8px;">Mooxes</div>
<div class="b" style="left:28.5px;top:110px;width:98.5px;height:1px;background:#404040;"></div>
<div class="b" style="left:47px;top:111px;width:77px;height:18px;background:#545454;border-radius:2px;"></div>
<svg class="ic" style="left:32.5px;top:115px" width="10" height="10" viewBox="0 0 10 10"><circle cx="5" cy="5.5" r="3.6" fill="none" stroke="#e0e0e0" stroke-width="1.2"/><path d="M5,0V10M1,5.5H9" stroke="#e0e0e0" stroke-width="1.2"/></svg>
<svg class="ic" style="left:46.5px;top:114.5px" width="11" height="11" viewBox="0 0 11 11"><circle cx="5.5" cy="5.5" r="4.6" fill="none" stroke="#e4e4e4" stroke-width="1.1"/><path d="M5.5,1V10M1,5.5H10" stroke="#cfcfcf" stroke-width="0.8"/><circle cx="5.5" cy="5.5" r="2.2" fill="none" stroke="#cfcfcf" stroke-width="0.7"/></svg>
<div class="t" style="left:63.5px;top:115px;font-size:8px;">Hoorbiot</div>
<div class="b" style="left:64px;top:131px;width:54px;height:16.5px;background:#3c3c3c;border-radius:2px;"></div>
<svg class="ic" style="left:40px;top:134px" width="18" height="10" viewBox="0 0 18 10"><path d="M1,1L9,5L17,1V9L9,5L1,9Z" fill="#555" stroke="#6e6e6e" stroke-width="1"/></svg>
<div class="t" style="left:68.5px;top:134.3px;font-weight:bold;font-size:6.6px;color:#e0e0e0">D-1JOOGOO - 0€</div>
<svg class="ic" style="left:38.5px;top:154.5px" width="8" height="6" viewBox="0 0 8 6"><ellipse cx="4" cy="3" rx="3.2" ry="2.1" fill="none" stroke="#c8c8c8" stroke-width="0.9"/></svg>
<div class="t" style="left:56.5px;top:152.4px;font-size:7px;color:#c8c8c8;text-decoration:underline;text-decoration-color:#888">InnUite</div>
<div class="b" style="left:88px;top:152.5px;width:13px;height:9.5px;background:#4a4a4a;border:1px solid #9a9a9a;"></div>
<svg class="ic" style="left:107px;top:153.5px" width="8" height="8" viewBox="0 0 8 8"><circle cx="4" cy="4" r="3.2" fill="#d8d8d8"/><circle cx="4" cy="4" r="1.2" fill="#4a4a4a"/><path d="M4,0V8M0,4H8M1.2,1.2L6.8,6.8M6.8,1.2L1.2,6.8" stroke="#d8d8d8" stroke-width="1"/></svg>
<div class="b" style="left:28.5px;top:166px;width:98.5px;height:30.5px;background:#494949;"></div>
<div class="b" style="left:28.5px;top:196.5px;width:98.5px;height:5.5px;background:#323232;"></div>
<div class="b" style="left:123px;top:197.5px;width:4px;height:3px;background:#c8c8c8;"></div>
<div class="b" style="left:28.5px;top:202px;width:98.5px;height:16px;background:#3b3b3b;"></div>
<div class="b" style="left:28.5px;top:202.5px;width:30px;height:15.5px;background:#4b4b4b;border-radius:2px 2px 0 0;"></div>
<div class="t" style="left:33px;top:205px;font-size:7.6px;">Rocure</div>
<div class="t" style="left:62px;top:205px;font-size:7.6px;">Poenlac</div>
<div class="t" style="left:124px;top:205.5px;font-size:7px;font-weight:bold">z</div>
<div class="b" style="left:28.5px;top:218px;width:98.5px;height:330px;background:#484848;"></div>
<div class="t" style="left:31px;top:225px;font-size:7.6px;font-weight:bold">Ione</div>
<div class="t" style="left:55px;top:225px;font-size:7px;font-weight:bold;color:#ececec">99IE</div>
<div class="b" style="left:71.5px;top:224px;width:21px;height:11.5px;background:#3e3e3e;border-radius:1.5px;"></div>
<div class="t" style="left:73.5px;top:225px;font-size:7px;font-weight:bold">3J#</div>
<div class="b" style="left:97.5px;top:224px;width:24px;height:11.5px;background:#3e3e3e;border-radius:1.5px;"></div>
<div class="t" style="left:100px;top:225px;font-size:7px;font-weight:bold">90l.'</div>
<div class="b" style="left:28.5px;top:239px;width:98.5px;height:1px;background:#424242;"></div>
<div class="b" style="left:33px;top:247px;width:7px;height:3.5px;background:#cfcfcf;border-radius:1px;"></div>
<div class="b" style="left:47px;top:240.5px;width:22px;height:17.5px;background:#434343;"></div>
<svg class="ic" style="left:50.5px;top:244px" width="10" height="9" viewBox="0 0 10 9"><rect x="0" y="0" width="10" height="9" fill="#e0e0e0"/><path d="M3,2V7M6,1V8M1,4H9" stroke="#888" stroke-width="0.8"/></svg>
<div class="b" style="left:62px;top:243px;width:3px;height:11px;background:#e6e6e6;"></div>
<svg class="ic" style="left:74px;top:244px" width="8" height="10" viewBox="0 0 8 10"><path d="M1,1.5Q6,0 6.5,3Q6.5,5 4,5Q7,5.5 6.5,8Q5,10 2,8.5" fill="none" stroke="#a8a8a8" stroke-width="1"/></svg>
<svg class="ic" style="left:87px;top:244px" width="7" height="10" viewBox="0 0 7 10"><circle cx="3.5" cy="2.5" r="2" fill="none" stroke="#b8b8b8" stroke-width="1"/><path d="M0.8,9Q0.8,5.5 3.5,5.5Q6.2,5.5 6.2,9" fill="none" stroke="#b8b8b8" stroke-width="1"/></svg>
<div class="t" style="left:97px;top:243.6px;font-size:7.6px;font-weight:bold">ertoa</div>
<div class="b" style="left:123.5px;top:247.5px;width:3.5px;height:2.5px;background:#d0d0d0;border-radius:1px;"></div>
<div class="b" style="left:28.5px;top:258.5px;width:98.5px;height:1px;background:#3c3c3c;"></div>
<div class="b" style="left:28.5px;top:259.5px;width:16.5px;height:24.5px;background:#464646;"></div>
<div class="b" style="left:45.5px;top:259.5px;width:81.5px;height:24.5px;background:#545454;"></div>
<div class="b" style="left:28.5px;top:283.7px;width:98.5px;height:0.8px;background:#3f3f3f;"></div>
<svg class="ic" style="left:32px;top:269.5px" width="8" height="5" viewBox="0 0 8 5"><path d="M0,0.5H8L7,2.5H5L4,4.5L3,2.5H1Z" fill="#f4f4f4"/></svg>
<svg class="ic" style="left:47.5px;top:261.5px" width="21" height="20" viewBox="0 0 21 20"><rect x="0" y="0" width="21" height="20" rx="1" fill="#2a2a2a"/><rect x="1" y="1" width="19" height="18" fill="#8796c4"/><rect x="4.5" y="5" width="12.5" height="10.5" fill="#5b6c8c"/><rect x="6" y="7" width="10" height="7" fill="#cfd6df"/><path d="M7,9H15M7,11.5H15M9,7V14M12,7V14" stroke="#7b869c" stroke-width="0.7"/><rect x="7" y="3" width="5" height="1.6" fill="#49597a"/></svg>
<div class="t" style="left:74px;top:267px;font-size:8px;color:#e6e6e6">Soopuox</div>
<div class="b" style="left:28.5px;top:284.5px;width:16.5px;height:24.5px;background:#464646;"></div>
<div class="b" style="left:45.5px;top:284.5px;width:81.5px;height:24.5px;background:#4b4b4b;"></div>
<div class="b" style="left:28.5px;top:308.7px;width:98.5px;height:0.8px;background:#3f3f3f;"></div>
<svg class="ic" style="left:32px;top:294.5px" width="8" height="5" viewBox="0 0 8 5"><rect x="0.6" y="0.6" width="6.3" height="3.6" rx="1.6" fill="none" stroke="#c4c4c4" stroke-width="0.9"/></svg>
<svg class="ic" style="left:48px;top:287.5px" width="20" height="19" viewBox="0 0 20 19"><rect x="0" y="0" width="20" height="19" rx="1" fill="#2c2c2c"/><rect x="1" y="1" width="18" height="17" fill="#6f8fb6"/><rect x="2.2" y="2.2" width="15.6" height="14.6" fill="#33507c"/><rect x="4.5" y="5" width="11.5" height="8.5" fill="#c8d2de"/><path d="M5,8H15.5M5,10.5H15.5" stroke="#93a0b5" stroke-width="0.7"/></svg>
<div class="t" style="left:74px;top:292px;font-size:8px;color:#d4d4d4">Soe&nbsp; Donaot</div>
<div class="b" style="left:28.5px;top:309.5px;width:16.5px;height:24.5px;background:#464646;"></div>
<div class="b" style="left:45.5px;top:309.5px;width:81.5px;height:24.5px;background:#4b4b4b;"></div>
<div class="b" style="left:28.5px;top:333.7px;width:98.5px;height:0.8px;background:#3f3f3f;"></div>
<svg class="ic" style="left:32px;top:319.9px" width="8" height="5" viewBox="0 0 8 5"><rect x="0.6" y="0.6" width="6.3" height="3.6" rx="1.6" fill="none" stroke="#c4c4c4" stroke-width="0.9"/></svg>
<svg class="ic" style="left:48.5px;top:312.4px" width="20" height="20" viewBox="0 0 20 20"><rect x="0" y="0" width="20" height="20" rx="1.5" fill="#262626"/><rect x="1.2" y="1.2" width="17.6" height="17.6" fill="#e6e6e6"/><rect x="2" y="2" width="1.2" height="1.2" fill="#555"/><rect x="2" y="4.4" width="1.2" height="1.2" fill="#555"/><rect x="2" y="9.2" width="1.2" height="1.2" fill="#555"/><rect x="2" y="11.6" width="1.2" height="1.2" fill="#555"/><rect x="2" y="16.4" width="1.2" height="1.2" fill="#555"/><rect x="4.4" y="2" width="1.2" height="1.2" fill="#555"/><rect x="4.4" y="4.4" width="1.2" height="1.2" fill="#555"/><rect x="4.4" y="9.2" width="1.2" height="1.2" fill="#555"/><rect x="4.4" y="11.6" width="1.2" height="1.2" fill="#555"/><rect x="4.4" y="16.4" width="1.2" height="1.2" fill="#555"/><rect x="6.8" y="2" width="1.2" height="1.2" fill="#555"/><rect x="6.8" y="4.4" width="1.2" height="1.2" fill="#555"/><rect x="6.8" y="9.2" width="1.2" height="1.2" fill="#555"/><rect x="6.8" y="11.6" width="1.2" height="1.2" fill="#555"/><rect x="6.8" y="16.4" width="1.2" height="1.2" fill="#555"/><rect x="9.2" y="2" width="1.2" height="1.2" fill="#555"/><rect x="9.2" y="4.4" width="1.2" height="1.2" fill="#555"/><rect x="9.2" y="9.2" width="1.2" height="1.2" fill="#555"/><rect x="9.2" y="11.6" width="1.2" height="1.2" fill="#555"/><rect x="9.2" y="16.4" width="1.2" height="1.2" fill="#555"/><rect x="11.6" y="2" width="1.2" height="1.2" fill="#555"/><rect x="11.6" y="4.4" width="1.2" height="1.2" fill="#555"/><rect x="11.6" y="9.2" width="1.2" height="1.2" fill="#555"/><rect x="11.6" y="11.6" width="1.2" height="1.2" fill="#555"/><rect x="11.6" y="16.4" width="1.2" height="1.2" fill="#555"/><rect x="14" y="2" width="1.2" height="1.2" fill="#555"/><rect x="14" y="4.4" width="1.2" height="1.2" fill="#555"/><rect x="14" y="9.2" width="1.2" height="1.2" fill="#555"/><rect x="14" y="11.6" width="1.2" height="1.2" fill="#555"/><rect x="14" y="16.4" width="1.2" height="1.2" fill="#555"/><rect x="16.4" y="2" width="1.2" height="1.2" fill="#555"/><rect x="16.4" y="4.4" width="1.2" height="1.2" fill="#555"/><rect x="16.4" y="9.2" width="1.2" height="1.2" fill="#555"/><rect x="16.4" y="11.6" width="1.2" height="1.2" fill="#555"/><rect x="16.4" y="16.4" width="1.2" height="1.2" fill="#555"/></svg>
<div class="t" style="left:74px;top:317.4px;font-size:8px;color:#d4d4d4">Faodets Rg</div>
<div class="b" style="left:28.5px;top:334.5px;width:16.5px;height:24.5px;background:#464646;"></div>
<div class="b" style="left:45.5px;top:334.5px;width:81.5px;height:24.5px;background:#4b4b4b;"></div>
<div class="b" style="left:28.5px;top:358.7px;width:98.5px;height:0.8px;background:#3f3f3f;"></div>
<svg class="ic" style="left:32px;top:344.5px" width="8" height="5" viewBox="0 0 8 5"><rect x="0.6" y="0.6" width="6.3" height="3.6" rx="1.6" fill="none" stroke="#c4c4c4" stroke-width="0.9"/></svg>
<svg class="ic" style="left:48.5px;top:337px" width="20" height="20" viewBox="0 0 20 20"><rect x="0" y="0" width="20" height="20" rx="1.5" fill="#262626"/><rect x="1.2" y="1.2" width="17.6" height="17.6" fill="#e6e6e6"/><rect x="2" y="4.4" width="1.2" height="1.2" fill="#555"/><rect x="2" y="6.8" width="1.2" height="1.2" fill="#555"/><rect x="2" y="11.6" width="1.2" height="1.2" fill="#555"/><rect x="2" y="14" width="1.2" height="1.2" fill="#555"/><rect x="4.4" y="4.4" width="1.2" height="1.2" fill="#555"/><rect x="4.4" y="6.8" width="1.2" height="1.2" fill="#555"/><rect x="4.4" y="11.6" width="1.2" height="1.2" fill="#555"/><rect x="4.4" y="14" width="1.2" height="1.2" fill="#555"/><rect x="6.8" y="4.4" width="1.2" height="1.2" fill="#555"/><rect x="6.8" y="6.8" width="1.2" height="1.2" fill="#555"/><rect x="6.8" y="11.6" width="1.2" height="1.2" fill="#555"/><rect x="6.8" y="14" width="1.2" height="1.2" fill="#555"/><rect x="9.2" y="4.4" width="1.2" height="1.2" fill="#555"/><rect x="9.2" y="6.8" width="1.2" height="1.2" fill="#555"/><rect x="9.2" y="11.6" width="1.2" height="1.2" fill="#555"/><rect x="9.2" y="14" width="1.2" height="1.2" fill="#555"/><rect x="11.6" y="4.4" width="1.2" height="1.2" fill="#555"/><rect x="11.6" y="6.8" width="1.2" height="1.2" fill="#555"/><rect x="11.6" y="11.6" width="1.2" height="1.2" fill="#555"/><rect x="11.6" y="14" width="1.2" height="1.2" fill="#555"/><rect x="14" y="4.4" width="1.2" height="1.2" fill="#555"/><rect x="14" y="6.8" width="1.2" height="1.2" fill="#555"/><rect x="14" y="11.6" width="1.2" height="1.2" fill="#555"/><rect x="14" y="14" width="1.2" height="1.2" fill="#555"/><rect x="16.4" y="4.4" width="1.2" height="1.2" fill="#555"/><rect x="16.4" y="6.8" width="1.2" height="1.2" fill="#555"/><rect x="16.4" y="11.6" width="1.2" height="1.2" fill="#555"/><rect x="16.4" y="14" width="1.2" height="1.2" fill="#555"/></svg>
<div class="t" style="left:74.5px;top:342px;font-size:8px;color:#d4d4d4">Seopatie</div>
<div class="b" style="left:28.5px;top:359.5px;width:16.5px;height:24.5px;background:#464646;"></div>
<div class="b" style="left:45.5px;top:359.5px;width:81.5px;height:24.5px;background:#4b4b4b;"></div>
<div class="b" style="left:28.5px;top:383.7px;width:98.5px;height:0.8px;background:#3f3f3f;"></div>
<svg class="ic" style="left:32px;top:369.9px" width="8" height="5" viewBox="0 0 8 5"><rect x="0.6" y="0.6" width="6.3" height="3.6" rx="1.6" fill="none" stroke="#c4c4c4" stroke-width="0.9"/></svg>
<svg class="ic" style="left:48.5px;top:362.4px" width="20" height="20" viewBox="0 0 20 20"><rect x="0" y="0" width="20" height="20" rx="1.5" fill="#262626"/><rect x="1.2" y="1.2" width="17.6" height="17.6" fill="#d9dcdc"/></svg>
<div class="t" style="left:74.5px;top:367.4px;font-size:8px;color:#d4d4d4">Seoplofs</div>
<div class="b" style="left:28.5px;top:384.5px;width:16.5px;height:24.5px;background:#464646;"></div>
<div class="b" style="left:45.5px;top:384.5px;width:81.5px;height:24.5px;background:#4b4b4b;"></div>
<div class="b" style="left:28.5px;top:408.7px;width:98.5px;height:0.8px;background:#3f3f3f;"></div>
<svg class="ic" style="left:32px;top:394.9px" width="8" height="5" viewBox="0 0 8 5"><rect x="0.6" y="0.6" width="6.3" height="3.6" rx="1.6" fill="none" stroke="#c4c4c4" stroke-width="0.9"/></svg>
<svg class="ic" style="left:48.5px;top:387.4px" width="20" height="20" viewBox="0 0 20 20"><rect x="0" y="0" width="20" height="20" rx="1.5" fill="#262626"/><rect x="1.2" y="1.2" width="17.6" height="17.6" fill="#d9dcdc"/></svg>
<div class="t" style="left:75px;top:392.4px;font-size:8px;color:#d4d4d4">Faoctis</div>
</div>
</div>

<div id="dlg">
 <div class="h">Gnetative Fill</div>
 <svg class="abs" style="left:169.5px;top:12px" width="9" height="9" viewBox="0 0 9 9"><path d="M0.7,0.7L8.3,8.3M8.3,0.7L0.7,8.3" stroke="#444" stroke-width="1.1" fill="none"/></svg>
 <svg class="abs" style="left:8.5px;top:33px" width="11" height="10" viewBox="0 0 11 10"><circle cx="4" cy="6" r="2.6" fill="#555"/><path d="M1,2.5H6.5M7.5,2L9.5,4V8" stroke="#666" stroke-width="1.1" fill="none"/></svg>
 <div class="sub">Ikerks torisals</div>
 <div class="sep"></div>
 <div class="inp">clean floor shadow</div>
 <div class="btn"><span>Eitk</span></div>
</div>
</body></html>
